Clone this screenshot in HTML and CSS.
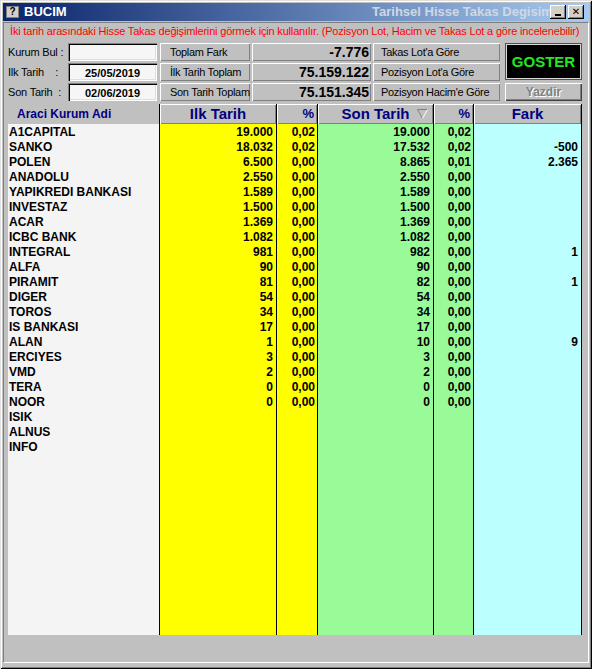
FILE: index.html
```html
<!DOCTYPE html>
<html lang="tr">
<head>
<meta charset="utf-8">
<title>BUCIM</title>
<link rel="stylesheet" href="styles.css">
</head>
<body>
<div class="win">
  <div class="titlebar">
    <span class="ticon">?</span>
    <span class="ttitle">BUCIM</span>
    <span class="tright">Tarihsel Hisse Takas Degisim</span>
    <span class="tbtn tmin"><span class="minbar"></span></span>
    <span class="tbtn tclose">&#x2715;</span>
  </div>
  <div class="client">
    <div class="info">İki tarih arasındaki Hisse Takas değişimlerini görmek için kullanılır. (Pozisyon Lot, Hacim ve Takas Lot a göre incelenebilir)</div>
    <div class="controls">
      <div class="lbl">Kurum Bul :</div>
      <div class="inp"></div>
      <div class="btn">Toplam Fark</div>
      <div class="val">-7.776</div>
      <div class="btn btn2">Takas Lot'a Göre</div>
      <div class="goster">GOSTER</div>

      <div class="lbl">Ilk Tarih &nbsp;&nbsp;&nbsp;:</div>
      <div class="inp">25/05/2019</div>
      <div class="btn">İlk Tarih Toplam</div>
      <div class="val">75.159.122</div>
      <div class="btn btn2">Pozisyon Lot'a Göre</div>

      <div class="lbl">Son Tarih &nbsp;:</div>
      <div class="inp">02/06/2019</div>
      <div class="btn">Son Tarih Toplam</div>
      <div class="val">75.151.345</div>
      <div class="btn btn2">Pozisyon Hacim'e Göre</div>
      <div class="yazdir">Yazdir</div>
    </div>

    <div class="grid">
      <div class="hd hd-name">Araci Kurum Adi</div>
      <div class="hd hd-big">Ilk Tarih</div>
      <div class="hd hd-pct">%</div>
      <div class="hd hd-big hd-sort">Son Tarih<svg class="sorticon" width="11" height="10" viewBox="0 0 11 10"><polyline points="0.5,0.5 10.5,0.5" stroke="#808080" fill="none"/><polyline points="0.5,0.5 5.5,9.5" stroke="#808080" fill="none"/><polyline points="10.5,0.5 5.5,9.5" stroke="#ffffff" fill="none"/></svg></div>
      <div class="hd hd-pct">%</div>
      <div class="hd hd-big">Fark</div>

      <div class="c nm">A1CAPITAL</div><div class="c y">19.000</div><div class="c y p">0,02</div><div class="c g">19.000</div><div class="c g p">0,02</div><div class="c f"></div>
      <div class="c nm">SANKO</div><div class="c y">18.032</div><div class="c y p">0,02</div><div class="c g">17.532</div><div class="c g p">0,02</div><div class="c f">-500</div>
      <div class="c nm">POLEN</div><div class="c y">6.500</div><div class="c y p">0,00</div><div class="c g">8.865</div><div class="c g p">0,01</div><div class="c f">2.365</div>
      <div class="c nm">ANADOLU</div><div class="c y">2.550</div><div class="c y p">0,00</div><div class="c g">2.550</div><div class="c g p">0,00</div><div class="c f"></div>
      <div class="c nm">YAPIKREDI BANKASI</div><div class="c y">1.589</div><div class="c y p">0,00</div><div class="c g">1.589</div><div class="c g p">0,00</div><div class="c f"></div>
      <div class="c nm">INVESTAZ</div><div class="c y">1.500</div><div class="c y p">0,00</div><div class="c g">1.500</div><div class="c g p">0,00</div><div class="c f"></div>
      <div class="c nm">ACAR</div><div class="c y">1.369</div><div class="c y p">0,00</div><div class="c g">1.369</div><div class="c g p">0,00</div><div class="c f"></div>
      <div class="c nm">ICBC BANK</div><div class="c y">1.082</div><div class="c y p">0,00</div><div class="c g">1.082</div><div class="c g p">0,00</div><div class="c f"></div>
      <div class="c nm">INTEGRAL</div><div class="c y">981</div><div class="c y p">0,00</div><div class="c g">982</div><div class="c g p">0,00</div><div class="c f">1</div>
      <div class="c nm">ALFA</div><div class="c y">90</div><div class="c y p">0,00</div><div class="c g">90</div><div class="c g p">0,00</div><div class="c f"></div>
      <div class="c nm">PIRAMIT</div><div class="c y">81</div><div class="c y p">0,00</div><div class="c g">82</div><div class="c g p">0,00</div><div class="c f">1</div>
      <div class="c nm">DIGER</div><div class="c y">54</div><div class="c y p">0,00</div><div class="c g">54</div><div class="c g p">0,00</div><div class="c f"></div>
      <div class="c nm">TOROS</div><div class="c y">34</div><div class="c y p">0,00</div><div class="c g">34</div><div class="c g p">0,00</div><div class="c f"></div>
      <div class="c nm">IS BANKASI</div><div class="c y">17</div><div class="c y p">0,00</div><div class="c g">17</div><div class="c g p">0,00</div><div class="c f"></div>
      <div class="c nm">ALAN</div><div class="c y">1</div><div class="c y p">0,00</div><div class="c g">10</div><div class="c g p">0,00</div><div class="c f">9</div>
      <div class="c nm">ERCIYES</div><div class="c y">3</div><div class="c y p">0,00</div><div class="c g">3</div><div class="c g p">0,00</div><div class="c f"></div>
      <div class="c nm">VMD</div><div class="c y">2</div><div class="c y p">0,00</div><div class="c g">2</div><div class="c g p">0,00</div><div class="c f"></div>
      <div class="c nm">TERA</div><div class="c y">0</div><div class="c y p">0,00</div><div class="c g">0</div><div class="c g p">0,00</div><div class="c f"></div>
      <div class="c nm">NOOR</div><div class="c y">0</div><div class="c y p">0,00</div><div class="c g">0</div><div class="c g p">0,00</div><div class="c f"></div>
      <div class="c nm">ISIK</div><div class="c y"></div><div class="c y p"></div><div class="c g"></div><div class="c g p"></div><div class="c f"></div>
      <div class="c nm">ALNUS</div><div class="c y"></div><div class="c y p"></div><div class="c g"></div><div class="c g p"></div><div class="c f"></div>
      <div class="c nm">INFO</div><div class="c y"></div><div class="c y p"></div><div class="c g"></div><div class="c g p"></div><div class="c f"></div>
      <div class="c nm"></div><div class="c y"></div><div class="c y p"></div><div class="c g"></div><div class="c g p"></div><div class="c f"></div>
    </div>
  </div>
</div>
</body>
</html>
```

FILE: styles.css
```css
* { box-sizing: border-box; }
html, body { margin: 0; padding: 0; }
body {
  width: 592px;
  height: 669px;
  overflow: hidden;
  background: #c0c0c0;
  font-family: "Liberation Sans", Arial, sans-serif;
}
.win {
  width: 592px;
  height: 669px;
  background: #c0c0c0;
  padding: 3px;
  box-shadow: inset 1px 1px #dfdfdf, inset -1px -1px #000, inset 2px 2px #fff, inset -2px -2px #808080;
}
.titlebar {
  height: 18px;
  display: flex;
  align-items: center;
  padding-left: 3px;
  padding-right: 5px;
  background: linear-gradient(to right, #0a246a, #a6caf0);
}
.ticon {
  width: 13px;
  height: 12px;
  background: #d4d0c8;
  border: 1px solid #808080;
  color: #000;
  font: bold 10px/10px "Liberation Sans", Arial, sans-serif;
  text-align: center;
}
.ttitle {
  margin-left: 5px;
  color: #fff;
  font: bold 13px/18px "Liberation Sans", Arial, sans-serif;
}
.tright {
  margin-left: auto;
  width: 178px;
  overflow: hidden;
  white-space: nowrap;
  color: #d0d8e4;
  font: bold 13px/18px "Liberation Sans", Arial, sans-serif;
}
.tbtn {
  width: 16px;
  height: 14px;
  background: #d4d0c8;
  box-shadow: inset -1px -1px #000, inset 1px 1px #fff, inset -2px -2px #808080;
  display: flex;
  align-items: center;
  justify-content: center;
  color: #000;
}
.tmin { margin-right: 2px; }
.minbar {
  width: 6px;
  height: 2px;
  background: #000;
  margin-top: 6px;
}
.tclose {
  font: bold 10px/14px "DejaVu Sans", sans-serif;
}
.client {
  margin-top: 1px;
  height: 641px;
  border-top: 1px solid #808080;
  border-left: 1px solid #808080;
  border-right: 1px solid #fff;
  border-bottom: 1px solid #fff;
}
.info {
  height: 16px;
  padding-left: 6px;
  color: #f00;
  font-size: 11px;
  line-height: 16px;
  letter-spacing: -0.18px;
  white-space: nowrap;
}
.controls {
  margin-top: 4px;
  padding-left: 4px;
  display: grid;
  grid-template-columns: 60px 89px 93px 121px 129px 82px;
  grid-template-rows: 18px 18px 18px;
  row-gap: 2px;
  font-size: 11px;
}
.lbl {
  line-height: 18px;
  color: #000;
  white-space: nowrap;
  letter-spacing: -0.2px;
}
.inp {
  background: #f6f6f6;
  box-shadow: inset 1px 1px #808080, inset 2px 2px #000, inset -1px -1px #fff, inset -2px -2px #dfdfdf;
  text-align: center;
  font-weight: bold;
  line-height: 18px;
  padding-top: 1px;
}
.btn {
  margin-left: 3px;
  background: #c0c0c0;
  box-shadow: inset 1px 1px #fff, inset -1px -1px #808080;
  padding-left: 10px;
  line-height: 18px;
  white-space: nowrap;
  overflow: hidden;
  letter-spacing: -0.3px;
}
.btn2 {
  margin-left: 2px;
  padding-left: 8px;
}
.val {
  margin-left: 2px;
  background: #c0c0c0;
  box-shadow: inset 1px 1px #fff, inset -1px -1px #808080;
  text-align: right;
  padding-right: 2px;
  font-size: 14px;
  font-weight: bold;
  line-height: 18px;
}
.goster {
  grid-column: 6;
  grid-row: 1 / span 2;
  margin-left: 5px;
  margin-bottom: 1px;
  background: #000;
  border: 1px solid #505050;
  box-shadow: inset 0 0 0 1px #d8d8d8;
  color: #22e822;
  font-size: 15px;
  font-weight: bold;
  display: flex;
  align-items: center;
  justify-content: center;
}
.yazdir {
  grid-column: 6;
  grid-row: 3;
  margin-left: 5px;
  background: #c0c0c0;
  box-shadow: inset 1px 1px #fff, inset -1px -1px #404040, inset -2px -2px #808080;
  color: #808080;
  text-shadow: 1px 1px #fff;
  font-size: 12px;
  font-weight: bold;
  text-align: center;
  line-height: 18px;
}
.grid {
  margin-top: 3px;
  margin-left: 4px;
  width: 574px;
  height: 531px;
  display: grid;
  grid-template-columns: 152px 117px 41px 116px 40px 108px;
  grid-template-rows: 20px repeat(22, 15px) 1fr;
}
.hd {
  background: #c0c0c0;
  border-right: 1px solid #000;
  color: #000080;
  font-weight: bold;
  white-space: nowrap;
  box-shadow: inset 1px 1px #fff, inset -1px -1px #808080;
  position: relative;
}
.hd-name {
  box-shadow: none;
  font-size: 12px;
  line-height: 20px;
  padding-left: 9px;
}
.hd-big {
  font-size: 15px;
  line-height: 20px;
  text-align: center;
}
.hd-pct {
  font-size: 13px;
  line-height: 20px;
  text-align: right;
  padding-right: 3px;
}
.sorticon {
  position: absolute;
  right: 5px;
  top: 5px;
}
.c {
  border-right: 1px solid #000;
  font-size: 12px;
  font-weight: bold;
  line-height: 16px;
  color: #000;
  text-align: right;
  padding-right: 3px;
  white-space: nowrap;
  overflow: hidden;
}
.nm {
  background: #f4f4f4;
  text-align: left;
  padding-left: 1px;
  padding-right: 0;
}
.y { background: #ffff00; }
.g { background: #98fb98; }
.f { background: #bbffff; }
.p { padding-right: 2px; }
```
